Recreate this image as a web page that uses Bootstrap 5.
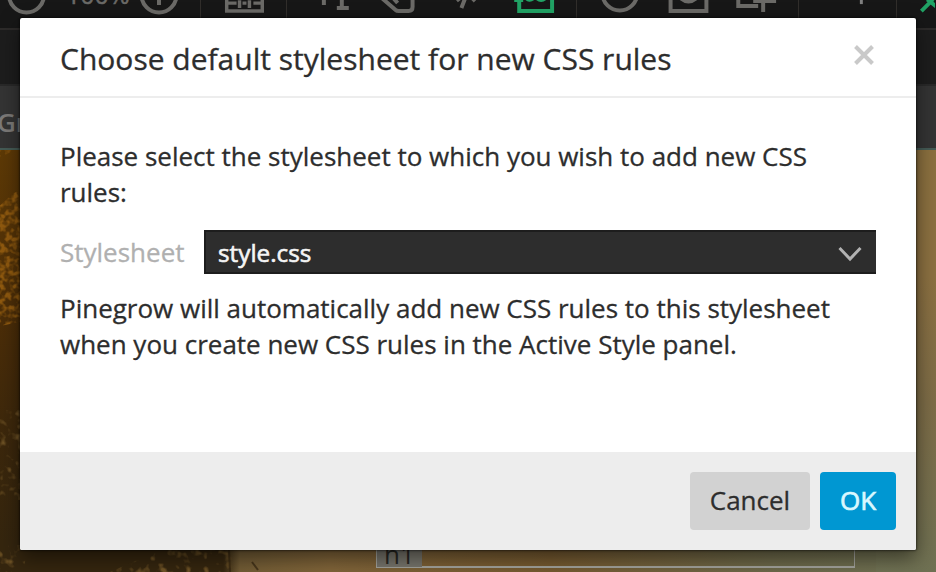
<!DOCTYPE html>
<html lang="en">
<head>
<meta charset="utf-8">
<title>Choose default stylesheet</title>
<meta name="viewport" content="width=device-width, initial-scale=1">
<link href="https://cdn.jsdelivr.net/npm/bootstrap@5.3.0/dist/css/bootstrap.min.css" rel="stylesheet">
<style>
body{font-family:"Open Sans",sans-serif;font-size:26px;line-height:36px;color:#2d2d2d;height:572px;background:#171717}
.tools{height:30px;border-bottom:2px solid #2d2b2a;background:#171717}
.tools svg{display:block;height:28px;flex:none;fill:none;stroke:#6b6a67;stroke-width:4}
.tools svg+svg{border-left:1px solid #312e2b}
.strip{height:54px;background:#1d1d1d}
.tabs-row{height:66px;background:#343434;border-top:2px solid #292929;border-bottom:2px solid #455b56;color:#7c7a78;font-weight:600;line-height:72px}
.tabs-row span{margin-left:-3px}
.canvas-area{height:422px;background:linear-gradient(90deg,#4b2e08 0,#41290b 150px,#3c2a12 220px,#725c35 240px,#806439 330px,#765a30 550px,#6d694a 770px,#6f7153 936px)}
.sky{width:60px;height:422px;background:linear-gradient(180deg,#8b703f 0,#8b7041 30%,#7d6c47 60%,#6f7153 100%)}
.canvas-area svg{display:block}
.picked{left:376px;top:530px;width:479px;height:38px;border:1px solid #a3a39c;border-bottom-width:2px}
.picked span{display:block;width:45px;height:36px;background:#77756c;color:#282824;padding-left:7px;line-height:47px}
.dialog-box{left:20px;top:18px;width:896px;height:532px;border-radius:2px;box-shadow:0 0 2px 1px rgba(0,0,0,.45),0 8px 20px rgba(0,0,0,.5)}
.dialog-box .modal-header{height:80px;border-bottom:2px solid #ededed;padding:4px 40px 0}
.dialog-box .modal-title{font-size:30px;font-weight:400;line-height:40px;white-space:nowrap}
.dialog-box .modal-title,.intro,.note,.field-label,.btn-dismiss{-webkit-text-stroke:.3px currentColor}
.dialog-box .modal-body{padding:40px 40px 0}
.intro,.note{letter-spacing:-.005px}
.field-row{margin:20px 0 16px}
.dialog-box .modal-footer{height:98px;background:#ededed;padding:20px;gap:10px;border-radius:0 0 2px 2px}
.field-label{width:144px;color:#b0b0b0}
.picker{height:44px;background:#2d2d2d;border:2px solid #1d1d1d;border-right-width:0;color:#f5f5f5;padding:2px 14px 0 12px;font-size:24.3px;-webkit-text-stroke:.6px currentColor}
.picker svg{margin-top:2px}
.dialog-box .btn{height:58px;margin:0;border:0;border-radius:4px;font-size:26px;padding:0 0 2px}
.btn-dismiss{width:120px;background:#d2d2d2;color:#2d2d2d}
.btn-accept{width:76px;background:#0097d2;color:#d9f8ff;-webkit-text-stroke:.7px currentColor}
.close-x{margin:-9px 1px 0 0}
</style>
</head>
<body class="position-relative overflow-hidden">
<nav class="tools d-flex">
  <svg width="200" viewBox="0 0 200 28"><circle cx="26.500" cy="-5" r="17.500"/><circle cx="159" cy="-5" r="17.500"/><path d="M159-6V5"/><text x="66" y="4" font-family="Open Sans" font-size="25" font-weight="500" fill="#6b6a67" stroke="#6b6a67" stroke-width=".5">100%</text></svg>
  <svg width="86" viewBox="201 0 86 28"><path d="M227-8V11H263V-8M227 3H237M243 3H247M254 3H263M240 0V8M250 0V8" stroke-width="3.500"/></svg>
  <svg width="290" viewBox="287 0 290 28"><path d="M324-5V5M342-5V8M337 8H349M381-3L396 10Q397 11 399 11H409Q413 11 413 7V-4M391-5L398 3M467-5L462 8M456-4L460 1M478-4L473 1"/><path d="M520-5V11H553V-5M515 0H524M525-5Q530 4 536-4Q542 4 548-4" stroke="#21a365"/></svg>
  <svg width="222" viewBox="577 0 222 28"><circle cx="620" cy="-7" r="17.500"/><path d="M671-7V11H707V-7M679-4Q689 7 699-4M739-7V6H759M764-7V12M754 1H777"/></svg>
  <svg width="98" viewBox="799 0 98 28"><path d="M862-4V4" stroke-width="3" stroke="#808080"/></svg>
  <svg width="39" viewBox="897 0 39 28"><path d="M922 11L934-1M928-1L938 7" stroke="#21a365"/></svg>
</nav>
<div class="strip"></div>
<div class="tabs-row overflow-hidden"><span>Group</span></div>
<main class="canvas-area d-flex justify-content-between">
  <svg width="360" height="422" viewBox="0 150 360 422">
    <defs>
      <linearGradient id="dusk" x1="0" y1="0" x2="0" y2="1"><stop offset="0" stop-color="#5d3906"/><stop offset=".4" stop-color="#4b2d08"/><stop offset=".7" stop-color="#3b270c"/><stop offset="1" stop-color="#33250f"/></linearGradient>
      <linearGradient id="ground" x1="0" y1="0" x2="1" y2="0"><stop offset=".93" stop-color="#35260f"/><stop offset="1" stop-color="#725c35"/></linearGradient>
      <filter id="leaves" x="0" y="0" width="1" height="1" color-interpolation-filters="sRGB"><feTurbulence type="fractalNoise" baseFrequency=".17" numOctaves="2" seed="8"/><feColorMatrix values="0 0 0 0 .56  0 0 0 0 .35  0 0 0 0 .06  3.500 0 0 0 -1.450"/><feComposite in2="SourceGraphic" operator="in"/></filter>
      <filter id="twigs" x="0" y="0" width="1" height="1" color-interpolation-filters="sRGB"><feTurbulence type="fractalNoise" baseFrequency=".12" numOctaves="2" seed="3"/><feColorMatrix values="0 0 0 0 .44  0 0 0 0 .33  0 0 0 0 .15  4 0 0 0 -2.200"/><feComposite in2="SourceGraphic" operator="in"/></filter>
    </defs>
    <path d="M0 150H20V572H0Z" fill="url(#dusk)"/>
    <path d="M0 540H240V572H0Z" fill="url(#ground)"/>
    <g filter="url(#leaves)"><path d="M0 150H14L0 158M20 188V322L0 326V205"/></g>
    <g filter="url(#twigs)"><path d="M0 410H20V500H0ZM0 545H30L22 572H0ZM110 572L165 548H235V572Z"/></g>
    <path d="M229 550L230 572M252 562L258 570" stroke="#35250f" stroke-width="2" stroke-opacity=".7"/>
  </svg>
  <div class="sky"></div>
</main>
<div class="picked position-absolute"><span>h1</span></div>
<section class="dialog-box modal-content position-absolute border-0 bg-white" role="dialog" aria-labelledby="heading">
  <header class="modal-header d-flex align-items-center justify-content-between">
    <h4 class="modal-title" id="heading">Choose default stylesheet for new CSS rules</h4>
    <svg class="close-x" width="22" height="22" viewBox="0 0 22 22" stroke="#c9c9c9" stroke-width="4"><path d="M2.500 2.500L19.500 19.500M19.500 2.500L2.500 19.500"/></svg>
  </header>
  <div class="modal-body">
    <p class="mb-0 intro">Please select the stylesheet to which you wish to add new CSS<br>rules:</p>
    <div class="d-flex align-items-center field-row">
      <label class="field-label">Stylesheet</label>
      <div class="picker d-flex align-items-center justify-content-between flex-grow-1"><span>style.css</span>
        <svg width="24" height="16" viewBox="0 0 24 16" fill="none" stroke="#b2b2b2" stroke-width="3"><path d="M1.500 2L12 13L22.500 2"/></svg></div>
    </div>
    <p class="mb-0 note">Pinegrow will automatically add new CSS rules to this stylesheet<br>when you create new CSS rules in the Active Style panel.</p>
  </div>
  <footer class="modal-footer d-flex justify-content-end border-0">
    <button class="btn btn-dismiss">Cancel</button>
    <button class="btn btn-accept">OK</button>
  </footer>
</section>
<script src="https://cdn.jsdelivr.net/npm/bootstrap@5.3.0/dist/js/bootstrap.bundle.min.js"></script>
</body>
</html>
